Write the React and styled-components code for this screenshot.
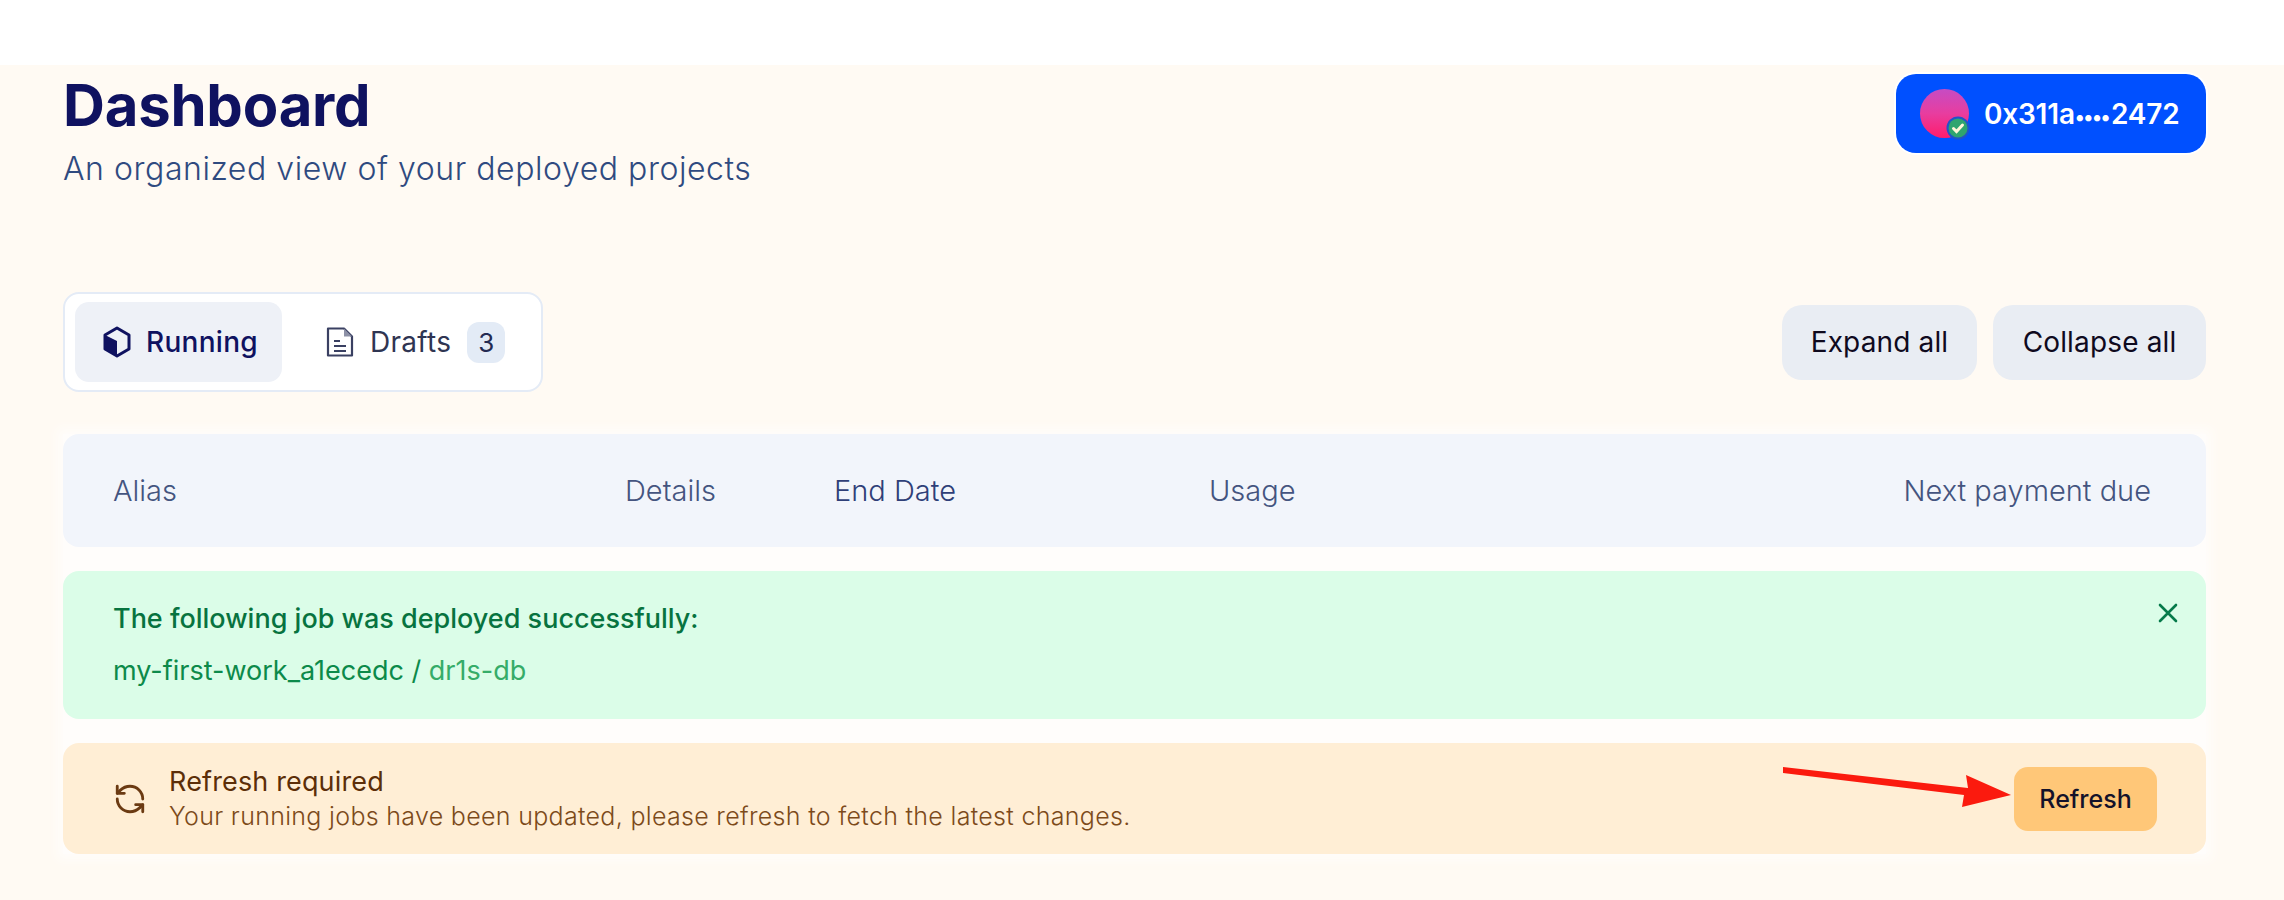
import React from 'react';
import styled, { createGlobalStyle } from 'styled-components';
import { RefreshCcw } from 'lucide-react';

const GlobalStyle = createGlobalStyle`
  html, body {
    margin: 0;
    padding: 0;
    background: #ffffff;
    font-family: Inter, "Liberation Sans", sans-serif;
  }
  * { box-sizing: border-box; }
`;

const TopStrip = styled.div`
  height: 65px;
  background: #ffffff;
`;

const Main = styled.main`
  position: relative;
  height: 835px;
  padding: 9px 78px 0 63px;
  background: #fffaf3;
  overflow: hidden;
`;

const Header = styled.header`
  display: flex;
  justify-content: space-between;
  align-items: flex-start;
  height: 218px;
`;

const Title = styled.h1`
  margin: 1px 0 0;
  font-size: 58px;
  line-height: 60px;
  font-weight: 700;
  letter-spacing: -0.2px;
  color: #0f1260;
`;

const Subtitle = styled.p`
  margin: 14px 0 0;
  font-size: 32px;
  line-height: 40px;
  font-weight: 300;
  letter-spacing: 0.55px;
  color: #2f4a80;
`;

const Wallet = styled.button`
  display: flex;
  align-items: center;
  gap: 15px;
  width: 310px;
  height: 79px;
  padding: 0 0 0 24px;
  border: 0;
  border-radius: 20px;
  background: #0050ff;
  color: #ffffff;
  font-family: inherit;
  font-size: 28px;
  font-weight: 600;
  box-shadow: 0 0 0 2px #ffffff;
`;

const Address = styled.span`
  letter-spacing: -0.2px;

  i {
    font-style: normal;
    font-size: 20px;
    letter-spacing: -1.5px;
    margin-right: 2px;
  }
`;

const Avatar = styled.span`
  position: relative;
  flex: none;
  width: 49px;
  height: 49px;
  border-radius: 50%;
  background: linear-gradient(to bottom, #c64cc4 0%, #e83d9f 50%, #ff1c6c 100%);
`;

const AvatarBadge = styled.svg`
  position: absolute;
  right: -1px;
  bottom: -2px;
  width: 24px;
  height: 24px;
`;

const Toolbar = styled.div`
  display: flex;
  justify-content: space-between;
  align-items: center;
  height: 100px;
  margin-bottom: 42px;
`;

const TabCard = styled.div`
  display: flex;
  align-items: center;
  width: 480px;
  height: 100px;
  padding: 0 10px;
  border: 2px solid #e4ebf6;
  border-radius: 16px;
  background: #ffffff;
`;

const Tab = styled.div`
  display: flex;
  align-items: center;
  gap: ${props => props.$active ? '15px' : '16px'};
  height: 80px;
  width: ${props => props.$active ? '207px' : 'auto'};
  padding-left: ${props => props.$active ? '28px' : '44px'};
  border-radius: 14px;
  background: ${props => props.$active ? '#eef1f7' : 'transparent'};
  color: ${props => props.$active ? '#0f1260' : '#2f3552'};
  font-size: 28px;
  letter-spacing: 0.3px;
  font-weight: ${props => props.$active ? 500 : 400};
`;

const CountBadge = styled.span`
  display: flex;
  align-items: center;
  justify-content: center;
  width: 38px;
  height: 41px;
  border-radius: 12px;
  background: #e3ebf6;
  color: #232a52;
  font-size: 26px;
`;

const Actions = styled.div`
  display: flex;
  gap: 16px;
`;

const ActionButton = styled.button`
  width: ${props => props.$width}px;
  height: 75px;
  border: 0;
  border-radius: 20px;
  background: #e9edf3;
  color: #0f0a1e;
  font-family: inherit;
  font-size: 28px;
  font-weight: 400;
  letter-spacing: 0.15px;
`;

const List = styled.div`
  display: flex;
  flex-direction: column;
  gap: 24px;
  background: #fffdfb;
  box-shadow: 0 0 10px 5px #fffdfb;
`;

const TableHead = styled.div`
  display: grid;
  grid-template-columns: 512px 209px 375px 1fr auto;
  align-items: center;
  height: 113px;
  padding: 0 55px 0 50px;
  border-radius: 16px;
  background: #f2f5fb;
  font-size: 29px;
`;

const HeadCell = styled.span`
  color: ${props => props.$dark ? '#2f3f78' : '#44547f'};
  font-weight: ${props => props.$dark ? 350 : 300};
`;

const SuccessBanner = styled.div`
  display: flex;
  justify-content: space-between;
  align-items: flex-start;
  height: 148px;
  padding: 28px 28px 0 50px;
  border-radius: 16px;
  background: #dbfde8;
`;

const SuccessTitle = styled.div`
  font-size: 27px;
  line-height: 40px;
  font-weight: 500;
  color: #07733f;
`;

const SuccessJob = styled.div`
  margin-top: 12px;
  font-size: 27px;
  line-height: 40px;
  font-weight: 400;
  color: #0c8a4a;

  span {
    color: #35ac68;
  }
`;

const CloseIcon = styled.svg`
  width: 20px;
  height: 20px;
  margin-top: 4px;
  stroke: #067a4a;
  stroke-width: 2.6;
  stroke-linecap: round;
`;

const RefreshBanner = styled.div`
  position: relative;
  display: flex;
  align-items: center;
  justify-content: space-between;
  height: 111px;
  padding: 0 49px 0 50px;
  border-radius: 16px;
  background: #ffeed5;
`;

const RefreshInfo = styled.div`
  display: flex;
  align-items: center;
  gap: 22px;
  color: #6b3a12;
`;

const RefreshTitle = styled.div`
  font-size: 27px;
  line-height: 34px;
  font-weight: 400;
  letter-spacing: 0.15px;
  color: #5c2e08;
`;

const RefreshText = styled.div`
  font-size: 25px;
  line-height: 34px;
  font-weight: 300;
  letter-spacing: 0.31px;
  color: #7c4a1a;
`;

const RefreshButton = styled.button`
  width: 143px;
  height: 64px;
  border: 0;
  border-radius: 14px;
  background: #ffc778;
  color: #14122a;
  font-family: inherit;
  font-size: 25px;
  font-weight: 500;
`;

const Arrow = styled.svg`
  position: absolute;
  left: 1720px;
  top: 23px;
  width: 232px;
  height: 44px;
`;

const BoxIcon = () => (
  <svg width="28" height="32" viewBox="0 0 28 32">
    <path d="M14 2 L26 9 V23 L14 30 L2 23 V9 Z" fill="none" stroke="#0f1260" strokeWidth="3" strokeLinejoin="round" />
    <path d="M2 9 L14 15 V30 L2 23 Z" fill="#0f1260" />
  </svg>
);

const DocIcon = () => (
  <svg width="28" height="30" viewBox="0 0 28 30">
    <path d="M2 1.5 H18 L26 9.5 V28.5 H2 Z" fill="#ffffff" stroke="#3a4062" strokeWidth="2.2" strokeLinejoin="round" />
    <path d="M18 1.5 L26 9.5 H18 Z" fill="#8d91a6" />
    <path d="M8 14 H14 M8 19 H20 M8 24 H20" stroke="#3a4062" strokeWidth="2.2" />
  </svg>
);

const App = () => {
  return (
    <>
      <GlobalStyle />
      <TopStrip />
      <Main>
        <Header>
          <div>
            <Title>Dashboard</Title>
            <Subtitle>An organized view of your deployed projects</Subtitle>
          </div>
          <Wallet>
            <Avatar>
              <AvatarBadge viewBox="0 0 24 24">
                <circle cx="12" cy="12" r="11.5" fill="#1f55c8" />
                <circle cx="12" cy="12" r="9.5" fill="#2fa56f" />
                <path d="M7.5 12.5 L10.5 15.5 L16.5 9" fill="none" stroke="#fff6d8" strokeWidth="3" strokeLinecap="round" />
              </AvatarBadge>
            </Avatar>
            <Address>0x311a<i>••••</i>2472</Address>
          </Wallet>
        </Header>

        <Toolbar>
          <TabCard>
            <Tab $active>
              <BoxIcon />
              Running
            </Tab>
            <Tab>
              <DocIcon />
              Drafts
              <CountBadge>3</CountBadge>
            </Tab>
          </TabCard>
          <Actions>
            <ActionButton $width={195}>Expand all</ActionButton>
            <ActionButton $width={213}>Collapse all</ActionButton>
          </Actions>
        </Toolbar>

        <List>
          <TableHead>
            <HeadCell>Alias</HeadCell>
            <HeadCell>Details</HeadCell>
            <HeadCell $dark>End Date</HeadCell>
            <HeadCell>Usage</HeadCell>
            <HeadCell>Next payment due</HeadCell>
          </TableHead>

          <SuccessBanner>
            <div>
              <SuccessTitle>The following job was deployed successfully:</SuccessTitle>
              <SuccessJob>my-first-work_a1ecedc / <span>dr1s-db</span></SuccessJob>
            </div>
            <CloseIcon viewBox="0 0 20 20">
              <path d="M2 2 L18 18 M18 2 L2 18" />
            </CloseIcon>
          </SuccessBanner>

          <RefreshBanner>
            <RefreshInfo>
              <RefreshCcw size={34} strokeWidth={2} />
              <div>
                <RefreshTitle>Refresh required</RefreshTitle>
                <RefreshText>Your running jobs have been updated, please refresh to fetch the latest changes.</RefreshText>
              </div>
            </RefreshInfo>
            <RefreshButton>Refresh</RefreshButton>
            <Arrow viewBox="0 0 232 44">
              <path d="M0 1 L185 22 L183 9 L228 29 L179 41 L181 29 L0 7 Z" fill="#fb1a0e" />
            </Arrow>
          </RefreshBanner>
        </List>
      </Main>
    </>
  );
};

export default App;
